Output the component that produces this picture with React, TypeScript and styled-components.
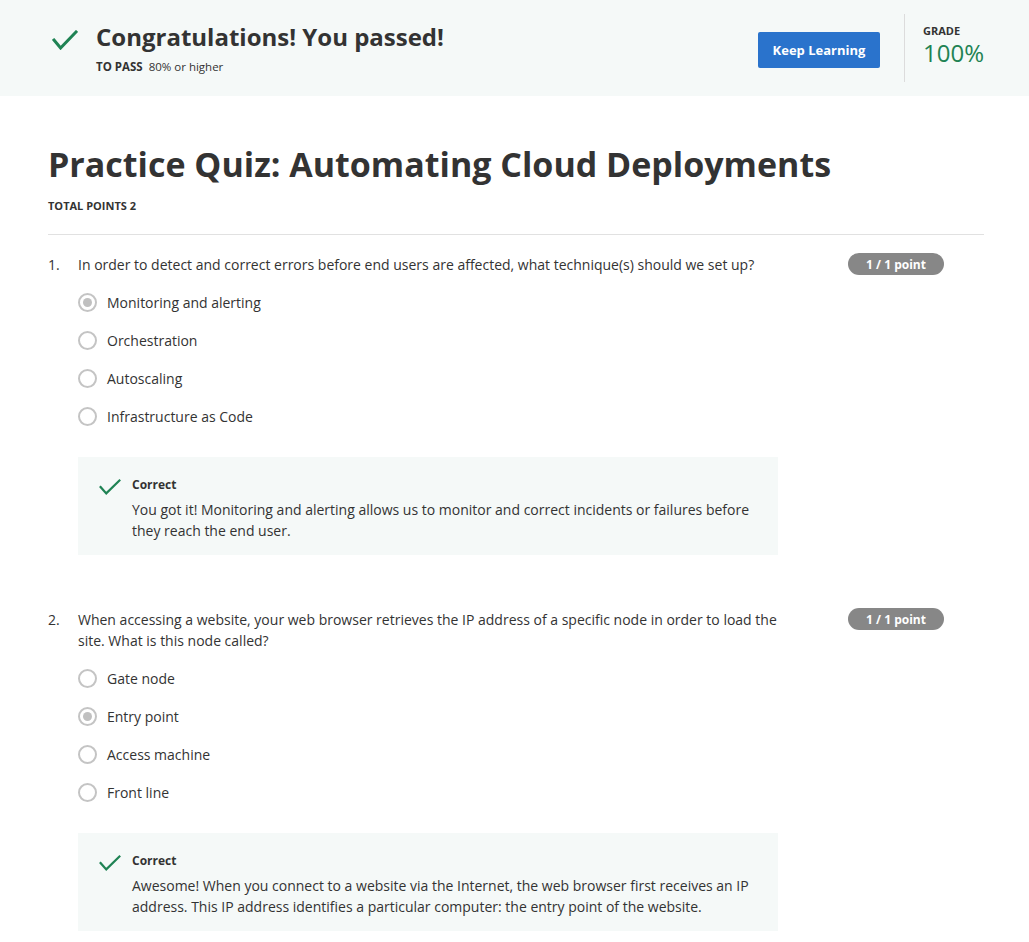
import React from "react";
import styled, { createGlobalStyle } from "styled-components";

const Global = createGlobalStyle`
  html, body { margin: 0; padding: 0; background: #fff; }
  body { font-family: "Open Sans", "Noto Sans", sans-serif; color: #333; }
  * { box-sizing: border-box; }
`;

const Banner = styled.header`
  background: #f5f9f8;
  height: 96px;
  display: flex;
  align-items: center;
  padding: 0 45px 0 52px;
`;

const BannerMain = styled.div`
  flex: 1;
  display: flex;
  align-items: flex-start;
  gap: 18px;
`;

const IconSlot = styled.div<{ $w: number; $top: number }>`
  flex: 0 0 ${(p) => p.$w}px;
  padding-top: ${(p) => p.$top}px;
  display: flex;
`;

const BannerText = styled.div`
  display: flex;
  flex-direction: column;
  align-items: flex-start;
`;

const BannerTitle = styled.h1`
  margin: 0;
  font-size: 24px;
  line-height: 30px;
  font-weight: 700;
  color: #333;
`;

const PassLine = styled.div`
  margin-top: 7px;
  font-size: 11.5px;
  line-height: 16px;
  color: #333;
`;

const PassLabel = styled.span`
  font-weight: 700;
  margin-right: 6px;
`;

const PrimaryButton = styled.button`
  width: 122px;
  height: 36px;
  margin-top: 4px;
  background: #2a73cc;
  color: #fff;
  border: none;
  border-radius: 2px;
  font-family: inherit;
  font-size: 13px;
  font-weight: 700;
  cursor: pointer;
  margin-right: 24px;
`;

const GradeBox = styled.div`
  height: 68px;
  border-left: 1px solid #dcdcdc;
  padding: 10px 0 0 18px;
  width: 80px;
`;

const GradeLabel = styled.div`
  font-size: 11px;
  font-weight: 700;
  line-height: 14px;
  color: #333;
`;

const GradeValue = styled.div`
  font-size: 24px;
  font-weight: 400;
  line-height: 30px;
  color: #1f8354;
`;

const Content = styled.main`
  padding: 0 45px 0 48px;
`;

const PageTitle = styled.h2`
  margin: 0;
  padding-top: 46px;
  font-size: 34px;
  line-height: 44px;
  font-weight: 700;
  color: #333;
`;

const TotalPoints = styled.div`
  margin-top: 12px;
  font-size: 11px;
  font-weight: 700;
  line-height: 16px;
  color: #333;
  padding-bottom: 20px;
  border-bottom: 1px solid #e1e1e1;
`;

const QuestionList = styled.ol`
  list-style: none;
  margin: 0;
  padding: 0;
`;

const QuestionItem = styled.li<{ $first?: boolean }>`
  display: flex;
  padding-top: ${(p) => (p.$first ? "19px" : "54px")};
`;

const QNumber = styled.div`
  width: 30px;
  font-size: 14px;
  line-height: 21px;
  color: #333;
`;

const QBody = styled.div`
  width: 700px;
`;

const QText = styled.div`
  font-size: 14px;
  line-height: 21px;
  color: #333;
`;

const Options = styled.div`
  margin-top: 17px;
  display: flex;
  flex-direction: column;
  gap: 17px;
`;

const Option = styled.label`
  display: flex;
  align-items: center;
  gap: 10px;
  font-size: 14px;
  line-height: 21px;
  color: #333;
`;

const Radio = styled.span<{ $checked?: boolean }>`
  width: 19px;
  height: 19px;
  border-radius: 50%;
  border: 2px solid #c4c4c4;
  background: #fff;
  display: flex;
  align-items: center;
  justify-content: center;
  &::after {
    content: "";
    width: 9px;
    height: 9px;
    border-radius: 50%;
    background: ${(p) => (p.$checked ? "#c0c0c0" : "transparent")};
  }
`;

const Feedback = styled.div`
  margin-top: 30px;
  background: #f5f9f8;
  padding: 20px 28px 14px 21px;
  display: flex;
  gap: 11px;
`;

const FeedbackText = styled.div`
  display: flex;
  flex-direction: column;
`;

const FeedbackLabel = styled.div`
  font-size: 12px;
  font-weight: 700;
  line-height: 16px;
  color: #333;
`;

const FeedbackBody = styled.div`
  margin-top: 6px;
  font-size: 14px;
  line-height: 21px;
  color: #333;
`;

const PointsCol = styled.div`
  flex: 1;
  display: flex;
  justify-content: flex-end;
  align-items: flex-start;
  padding-right: 40px;
`;

const PointsBadge = styled.span`
  width: 96px;
  height: 22px;
  margin-top: -1px;
  border-radius: 11px;
  background: #878787;
  color: #fff;
  font-size: 12px;
  font-weight: 700;
  display: flex;
  align-items: center;
  justify-content: center;
`;

const Check = ({ w, h, stroke }: { w: number; h: number; stroke: number }) => (
  <svg width={w} height={h} viewBox={`0 0 ${w} ${h}`} fill="none">
    <path
      d={`M${stroke / 2 + 0.5} ${h * 0.5} L${w * 0.33} ${h - stroke / 2 - 0.5} L${w - stroke / 2 - 0.5} ${stroke / 2 + 0.5}`}
      stroke="#1f8354"
      strokeWidth={stroke}
      strokeLinecap="square"
      strokeLinejoin="miter"
    />
  </svg>
);

type Q = {
  n: number;
  text: string;
  options: string[];
  selected: number;
  feedback: string;
};

const questions: Q[] = [
  {
    n: 1,
    text: "In order to detect and correct errors before end users are affected, what technique(s) should we set up?",
    options: ["Monitoring and alerting", "Orchestration", "Autoscaling", "Infrastructure as Code"],
    selected: 0,
    feedback:
      "You got it! Monitoring and alerting allows us to monitor and correct incidents or failures before they reach the end user.",
  },
  {
    n: 2,
    text: "When accessing a website, your web browser retrieves the IP address of a specific node in order to load the site. What is this node called?",
    options: ["Gate node", "Entry point", "Access machine", "Front line"],
    selected: 1,
    feedback:
      "Awesome! When you connect to a website via the Internet, the web browser first receives an IP address. This IP address identifies a particular computer: the entry point of the website.",
  },
];

export default function App() {
  return (
    <>
      <Global />
      <Banner>
        <BannerMain>
          <IconSlot $w={26} $top={8}>
            <Check w={26} h={20} stroke={3} />
          </IconSlot>
          <BannerText>
            <BannerTitle>Congratulations! You passed!</BannerTitle>
            <PassLine>
              <PassLabel>TO PASS</PassLabel>80% or higher
            </PassLine>
          </BannerText>
        </BannerMain>
        <PrimaryButton>Keep Learning</PrimaryButton>
        <GradeBox>
          <GradeLabel>GRADE</GradeLabel>
          <GradeValue>100%</GradeValue>
        </GradeBox>
      </Banner>
      <Content>
        <PageTitle>Practice Quiz: Automating Cloud Deployments</PageTitle>
        <TotalPoints>TOTAL POINTS 2</TotalPoints>
        <QuestionList>
          {questions.map((q, i) => (
            <QuestionItem key={q.n} $first={i === 0}>
              <QNumber>{q.n}.</QNumber>
              <QBody>
                <QText>{q.text}</QText>
                <Options>
                  {q.options.map((o, j) => (
                    <Option key={o}>
                      <Radio $checked={j === q.selected} />
                      {o}
                    </Option>
                  ))}
                </Options>
                <Feedback>
                  <IconSlot $w={22} $top={2}>
                    <Check w={22} h={16} stroke={2.2} />
                  </IconSlot>
                  <FeedbackText>
                    <FeedbackLabel>Correct</FeedbackLabel>
                    <FeedbackBody>{q.feedback}</FeedbackBody>
                  </FeedbackText>
                </Feedback>
              </QBody>
              <PointsCol>
                <PointsBadge>1 / 1 point</PointsBadge>
              </PointsCol>
            </QuestionItem>
          ))}
        </QuestionList>
      </Content>
    </>
  );
}
